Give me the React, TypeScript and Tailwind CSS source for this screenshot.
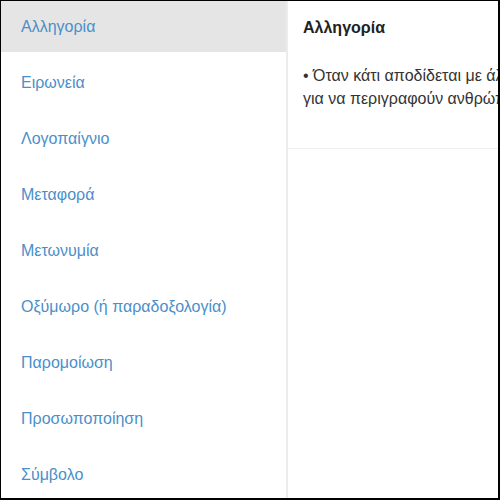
import React from "react";

const items = [
  "Αλληγορία",
  "Ειρωνεία",
  "Λογοπαίγνιο",
  "Μεταφορά",
  "Μετωνυμία",
  "Οξύμωρο (ή παραδοξολογία)",
  "Παρομοίωση",
  "Προσωποποίηση",
  "Σύμβολο",
];

const App: React.FC = () => {
  const active = 0;

  return (
    <div
      className="w-[500px] h-[500px] overflow-hidden bg-white border-t border-l border-r-2 border-b-2 border-black flex text-[16px]"
      style={{ fontFamily: '"Liberation Sans", Arial, sans-serif' }}
    >
      {/* sidebar */}
      <ul className="w-[287px] shrink-0 h-full flex flex-col gap-[5px] border-r-2 border-[#ececec]">
        {items.map((name, i) => (
          <li
            key={name}
            className={
              "h-[51px] shrink-0 flex items-center pl-[20px] text-[#4a8fc9] " +
              (i === active ? "bg-[#e5e5e5]" : "")
            }
          >
            {name}
          </li>
        ))}
      </ul>

      {/* content */}
      <div className="flex-1 min-w-0 overflow-hidden">
        <div className="w-[700px] border-b border-[#eeeeee] pl-[15px] pb-[38px]">
          <h3 className="pt-[16px] leading-[22px] font-bold text-[#222]">
            {items[active]}
          </h3>
          <p className="mt-[25px] leading-[23px] text-[#333] whitespace-nowrap">
            • Όταν κάτι αποδίδεται με άλλα λόγια από αυτά που κανονικά θα χρησιμοποιούνταν, όπως ζώα
            <br />
            για να περιγραφούν ανθρώπινες συμπεριφορές και χαρακτήρες.
          </p>
        </div>
      </div>
    </div>
  );
};

export default App;
